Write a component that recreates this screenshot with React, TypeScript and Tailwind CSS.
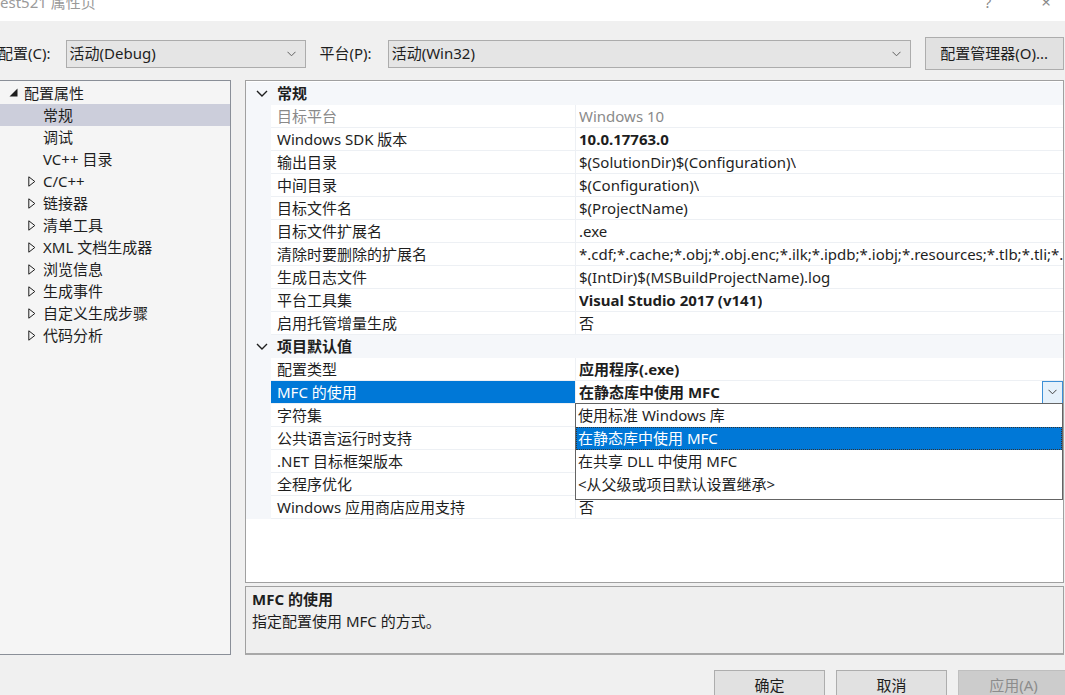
import React from "react";

const font = "font-['Noto_Sans','Noto_Sans_CJK_SC',sans-serif]";

function Chev({ color = "#606060" }: { color?: string }) {
  return (
    <svg width="9" height="6" viewBox="0 0 9 6">
      <path d="M0.5 0.8L4.5 4.8L8.5 0.8" fill="none" stroke={color} strokeWidth="1" />
    </svg>
  );
}

function HeaderChev() {
  return (
    <svg width="12" height="7" viewBox="0 0 12 7">
      <path d="M1 1L6 6L11 1" fill="none" stroke="#1e1e1e" strokeWidth="1.4" />
    </svg>
  );
}

function FilledTri() {
  return (
    <svg width="9" height="9" viewBox="0 0 9 9">
      <polygon points="8.5,0.5 8.5,8.5 0.5,8.5" fill="#1e1e1e" />
    </svg>
  );
}

function OutlineTri() {
  return (
    <svg width="8" height="11" viewBox="0 0 8 11">
      <polygon points="0.8,0.8 6.8,5.5 0.8,10.2" fill="none" stroke="#1e1e1e" strokeWidth="1" />
    </svg>
  );
}

const tree: { t: string; sel?: boolean; exp?: boolean }[] = [
  { t: "常规", sel: true },
  { t: "调试" },
  { t: "VC++ 目录" },
  { t: "C/C++", exp: true },
  { t: "链接器", exp: true },
  { t: "清单工具", exp: true },
  { t: "XML 文档生成器", exp: true },
  { t: "浏览信息", exp: true },
  { t: "生成事件", exp: true },
  { t: "自定义生成步骤", exp: true },
  { t: "代码分析", exp: true },
];

type RowT = { l: string; v: string; bold?: boolean; gray?: boolean; sel?: boolean; btn?: boolean };

const sec1: RowT[] = [
  { l: "目标平台", v: "Windows 10", gray: true },
  { l: "Windows SDK 版本", v: "10.0.17763.0", bold: true },
  { l: "输出目录", v: "$(SolutionDir)$(Configuration)\\" },
  { l: "中间目录", v: "$(Configuration)\\" },
  { l: "目标文件名", v: "$(ProjectName)" },
  { l: "目标文件扩展名", v: ".exe" },
  {
    l: "清除时要删除的扩展名",
    v: "*.cdf;*.cache;*.obj;*.obj.enc;*.ilk;*.ipdb;*.iobj;*.resources;*.tlb;*.tli;*.tlh;*.tmp;*.rsp;*.pgc;*.pgd;*.meta;*.tlog;*.manifest;*.res;*.pch;*.exp;*.idb;*.rep;*.xdc;*.pdb",
  },
  { l: "生成日志文件", v: "$(IntDir)$(MSBuildProjectName).log" },
  { l: "平台工具集", v: "Visual Studio 2017 (v141)", bold: true },
  { l: "启用托管增量生成", v: "否" },
];

const sec2: RowT[] = [
  { l: "配置类型", v: "应用程序(.exe)", bold: true },
  { l: "MFC 的使用", v: "在静态库中使用 MFC", bold: true, sel: true, btn: true },
  { l: "字符集", v: "" },
  { l: "公共语言运行时支持", v: "" },
  { l: ".NET 目标框架版本", v: "" },
  { l: "全程序优化", v: "" },
  { l: "Windows 应用商店应用支持", v: "否" },
];

function Row({ r }: { r: RowT }) {
  return (
    <div className="flex h-[23px]">
      <div className="w-[25px] shrink-0 bg-[#f5f7fa]" />
      <div
        className={`w-[305px] shrink-0 flex items-center pl-[6px] border-r border-b border-[#edf0f4] whitespace-nowrap ${
          r.sel ? "bg-[#0078d7] text-white" : r.gray ? "text-[#8a8a8a]" : "text-[#1e1e1e]"
        }`}
      >
        {r.l}
      </div>
      <div
        className={`flex-1 min-w-0 flex items-center justify-between pl-[3px] border-b border-[#edf0f4] overflow-hidden whitespace-nowrap ${
          r.bold ? "font-bold" : ""
        } ${r.gray ? "text-[#8a8a8a]" : "text-[#1e1e1e]"}`}
      >
        <span className="overflow-hidden">{r.v}</span>
        {r.btn && (
          <div className="w-[21px] h-[23px] shrink-0 border border-[#3c8fd6] bg-[#e5f1fb] flex items-center justify-center">
            <Chev color="#404040" />
          </div>
        )}
      </div>
    </div>
  );
}

function Header({ t }: { t: string }) {
  return (
    <div className="flex items-center h-[23px] bg-[#f5f7fa]">
      <div className="w-[31px] flex justify-center pl-[1px]">
        <HeaderChev />
      </div>
      <span className="font-bold text-[#1e1e1e]">{t}</span>
    </div>
  );
}

export default function App() {
  return (
    <div
      className={`${font} w-[1065px] h-[695px] overflow-hidden bg-[#f0f0f0] flex flex-col text-[15px] text-[#1e1e1e]`}
    >
      {/* title bar */}
      <div className="h-[21px] shrink-0 bg-white flex items-start justify-between overflow-hidden">
        <span className="-mt-[9px] text-[#9a9a9a] leading-[22px]">est521 属性页</span>
        <div className="flex items-start -mt-[9px] text-[#8a8a8a] leading-[22px]">
          <span className="mr-[50px]">?</span>
          <span className="mr-[14px] text-[17px]">×</span>
        </div>
      </div>

      {/* config row */}
      <div className="mt-[16px] h-[33px] shrink-0 flex items-center">
        <span className="-ml-[2px] whitespace-nowrap">配置(C):</span>
        <div className="ml-[15px] w-[240px] h-[28px] border border-[#acacac] bg-[#e5e5e5] flex items-center justify-between pl-[3px] pr-[9px]">
          <span>活动(Debug)</span>
          <Chev />
        </div>
        <span className="ml-[14px] whitespace-nowrap">平台(P):</span>
        <div className="ml-[16px] w-[523px] h-[28px] border border-[#acacac] bg-[#e5e5e5] flex items-center justify-between pl-[3px] pr-[9px]">
          <span>活动(Win32)</span>
          <Chev />
        </div>
        <div className="ml-[14px] w-[139px] h-[33px] border border-[#adadad] bg-[#e1e1e1] flex items-center justify-center">
          配置管理器(O)...
        </div>
      </div>

      {/* main */}
      <div className="mt-[10px] h-[575px] shrink-0 flex">
        {/* tree */}
        <div className="w-[231px] shrink-0 border-t border-r border-b border-[#8a8f98] bg-[#f5f5f5] pt-[1px]">
          <div className="h-[22px] flex items-center">
            <div className="w-[24px] flex justify-center pl-[2px] pb-[1px]">
              <FilledTri />
            </div>
            <span>配置属性</span>
          </div>
          {tree.map((it) => (
            <div
              key={it.t}
              className={`h-[22px] flex items-center ${it.sel ? "bg-[#cccedb]" : ""}`}
            >
              <div className="w-[43px] shrink-0 flex justify-start pl-[28px]">
                {it.exp && <OutlineTri />}
              </div>
              <span className="whitespace-nowrap">{it.t}</span>
            </div>
          ))}
        </div>

        {/* right */}
        <div className="ml-[14px] w-[819px] shrink-0 flex flex-col">
          <div className="relative h-[504px] border border-[#a0a0a0] bg-white pt-[1px]">
            <Header t="常规" />
            {sec1.map((r) => (
              <Row key={r.l} r={r} />
            ))}
            <Header t="项目默认值" />
            {sec2.map((r) => (
              <Row key={r.l} r={r} />
            ))}

            {/* dropdown list */}
            <div className="absolute left-[329px] top-[322px] w-[488px] h-[97px] border border-[#646464] bg-white flex flex-col">
              <div className="h-[23px] flex items-center pl-[2px]">使用标准 Windows 库</div>
              <div className="h-[23px] flex items-center pl-[1px] bg-[#0078d7] text-white border border-dotted border-[#333]">
                在静态库中使用 MFC
              </div>
              <div className="h-[23px] flex items-center pl-[2px]">在共享 DLL 中使用 MFC</div>
              <div className="h-[23px] flex items-center pl-[2px]">&lt;从父级或项目默认设置继承&gt;</div>
            </div>
          </div>

          {/* description */}
          <div className="mt-[3px] h-[69px] border border-[#a0a0a0] border-b-2 border-b-[#a8a8a8] bg-[#efefef] pl-[6px] pt-[1px]">
            <div className="font-bold h-[22px] flex items-center">MFC 的使用</div>
            <div className="h-[22px] flex items-center">指定配置使用 MFC 的方式。</div>
          </div>
        </div>
      </div>

      {/* buttons */}
      <div className="mt-[15px] flex gap-[11px] pl-[714px]">
        <div className="w-[111px] h-[30px] shrink-0 border border-[#adadad] bg-[#e1e1e1] flex items-center justify-center">
          确定
        </div>
        <div className="w-[111px] h-[30px] shrink-0 border border-[#adadad] bg-[#e1e1e1] flex items-center justify-center">
          取消
        </div>
        <div className="w-[111px] h-[30px] shrink-0 border border-[#bfbfbf] bg-[#cccccc] text-[#8c8c8c] flex items-center justify-center">
          应用(A)
        </div>
      </div>
    </div>
  );
}
